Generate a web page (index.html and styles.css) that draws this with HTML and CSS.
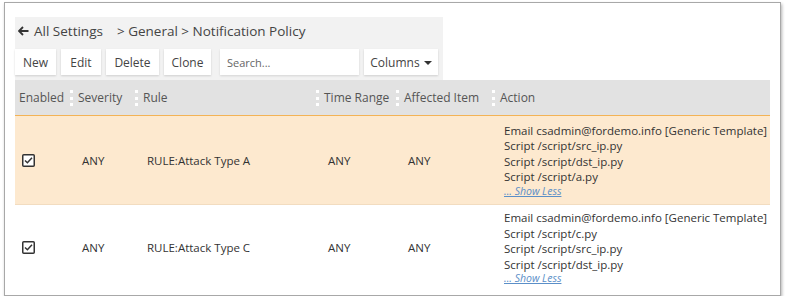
FILE: index.html
```html
<!DOCTYPE html>
<html lang="en">

<head>
  <meta charset="UTF-8">
  <title>Notification Policy</title>
  <link rel="stylesheet" href="styles.css">
</head>

<body>
  <div class="frame">
    <!-- Breadcrumb + toolbar -->
    <div class="toolbar">
      <div class="crumbs">
        <svg class="back" width="11" height="10" viewBox="0 0 11 10">
          <path d="M5 1 L1 5 L5 9 M1 5 H10.5" fill="none" stroke="#333" stroke-width="1.8"/>
        </svg>
        <span class="crumb-root">All Settings</span>
        <span>&gt; General &gt; Notification Policy</span>
      </div>
      <div class="actions">
        <button class="btn btn-new">New</button>
        <button class="btn btn-edit">Edit</button>
        <button class="btn btn-delete">Delete</button>
        <button class="btn btn-clone">Clone</button>
        <input class="search" type="text" placeholder="Search...">
        <button class="btn btn-columns">Columns <span class="caret"></span></button>
      </div>
    </div>

    <!-- Policy table -->
    <div class="grid">
      <div class="row head">
        <div class="cell">Enabled</div>
        <div class="cell"><span class="grip"></span>Severity</div>
        <div class="cell"><span class="grip"></span>Rule</div>
        <div class="cell"><span class="grip"></span>Time Range</div>
        <div class="cell"><span class="grip"></span>Affected Item</div>
        <div class="cell"><span class="grip"></span>Action</div>
      </div>

      <div class="row selected">
        <div class="cell check">
          <svg width="13" height="13" viewBox="0 0 13 13">
            <rect x="0.75" y="0.75" width="11.5" height="11.5" rx="1" fill="#fff" stroke="#333" stroke-width="1.5"/>
            <path d="M3 6.5 L5.4 8.8 L10 3.8" fill="none" stroke="#333" stroke-width="1.5"/>
          </svg>
        </div>
        <div class="cell">ANY</div>
        <div class="cell">RULE:Attack Type A</div>
        <div class="cell">ANY</div>
        <div class="cell">ANY</div>
        <div class="cell action">
          <div>Email csadmin@fordemo.info [Generic Template]</div>
          <div>Script /script/src_ip.py</div>
          <div>Script /script/dst_ip.py</div>
          <div>Script /script/a.py</div>
          <a href="#" class="more">... Show Less</a>
        </div>
      </div>

      <div class="row">
        <div class="cell check">
          <svg width="13" height="13" viewBox="0 0 13 13">
            <rect x="0.75" y="0.75" width="11.5" height="11.5" rx="1" fill="#fff" stroke="#333" stroke-width="1.5"/>
            <path d="M3 6.5 L5.4 8.8 L10 3.8" fill="none" stroke="#333" stroke-width="1.5"/>
          </svg>
        </div>
        <div class="cell">ANY</div>
        <div class="cell">RULE:Attack Type C</div>
        <div class="cell">ANY</div>
        <div class="cell">ANY</div>
        <div class="cell action">
          <div>Email csadmin@fordemo.info [Generic Template]</div>
          <div>Script /script/c.py</div>
          <div>Script /script/src_ip.py</div>
          <div>Script /script/dst_ip.py</div>
          <a href="#" class="more">... Show Less</a>
        </div>
      </div>
    </div>
  </div>
</body>

</html>
```

FILE: styles.css
```css
* {
  margin: 0;
  padding: 0;
  box-sizing: border-box;
  font-family: 'Open Sans', sans-serif;
}

body {
  background-color: #fff;
  color: #333;
  font-size: 11.5px;
}

.frame {
  margin: 2px 0 0 4px;
  width: 777px;
  height: 294px;
  border: 1px solid #a8a8a8;
  box-shadow: 1px 2px 3px rgba(0, 0, 0, 0.3);
  padding: 14px 10px 0 10px;
  background-color: #fff;
}

.toolbar {
  width: 428px;
  height: 63px;
  background-color: #f2f2f2;
}

.crumbs {
  display: flex;
  align-items: center;
  height: 32px;
  padding: 0 0 5px 3px;
  font-size: 13.5px;
  color: #444;
}

.crumbs .back {
  margin-right: 5px;
}

.crumb-root {
  margin-right: 14px;
}

.actions {
  display: flex;
  align-items: center;
  height: 26px;
  gap: 5px;
}

.btn {
  height: 26px;
  background-color: #fff;
  border: none;
  box-shadow: 0 1px 2px rgba(0, 0, 0, 0.15);
  font-size: 12px;
  color: #444;
  padding: 0;
}

.btn-new { width: 41px; }
.btn-edit { width: 40px; }
.btn-delete { width: 53px; }
.btn-clone { width: 47px; }

.btn-columns {
  width: 74px;
}

.caret {
  display: inline-block;
  width: 0;
  height: 0;
  border-left: 4px solid transparent;
  border-right: 4px solid transparent;
  border-top: 4px solid #333;
  vertical-align: middle;
  margin-left: 1px;
}

.search {
  width: 139px;
  height: 26px;
  margin-left: 4px;
  border: none;
  box-shadow: 0 1px 2px rgba(0, 0, 0, 0.12);
  padding: 0 7px;
  font-size: 11px;
  color: #555;
}

.search::placeholder {
  color: #666;
}

.grid {
  width: 755px;
}

.row {
  display: grid;
  grid-template-columns: 55px 65px 181px 80px 96px 1fr;
  height: 85px;
  align-items: center;
}

.row .cell {
  padding-left: 12px;
  white-space: nowrap;
}

.row.head {
  height: 35px;
  background-color: #e2e2e2;
  color: #555;
  font-size: 12px;
}

.row.head .cell {
  display: flex;
  align-items: center;
  padding-left: 0;
}

.row.head .cell:first-child {
  padding-left: 4px;
}

.grip {
  width: 3px;
  height: 16px;
  margin-right: 5px;
  border-left: 3px dotted #fff;
}

.row.selected {
  height: 90px;
  background-color: #fde9cf;
  border-top: 1px solid #f3b356;
  border-bottom: 1px solid #f2dcc0;
}

.row .check {
  padding-left: 7px;
  display: flex;
}

.action {
  line-height: 15.5px;
}

.action .more {
  display: block;
  font-size: 10.5px;
  font-style: italic;
  color: #5b8fc8;
  line-height: 13px;
  padding-left: 0;
}
```
